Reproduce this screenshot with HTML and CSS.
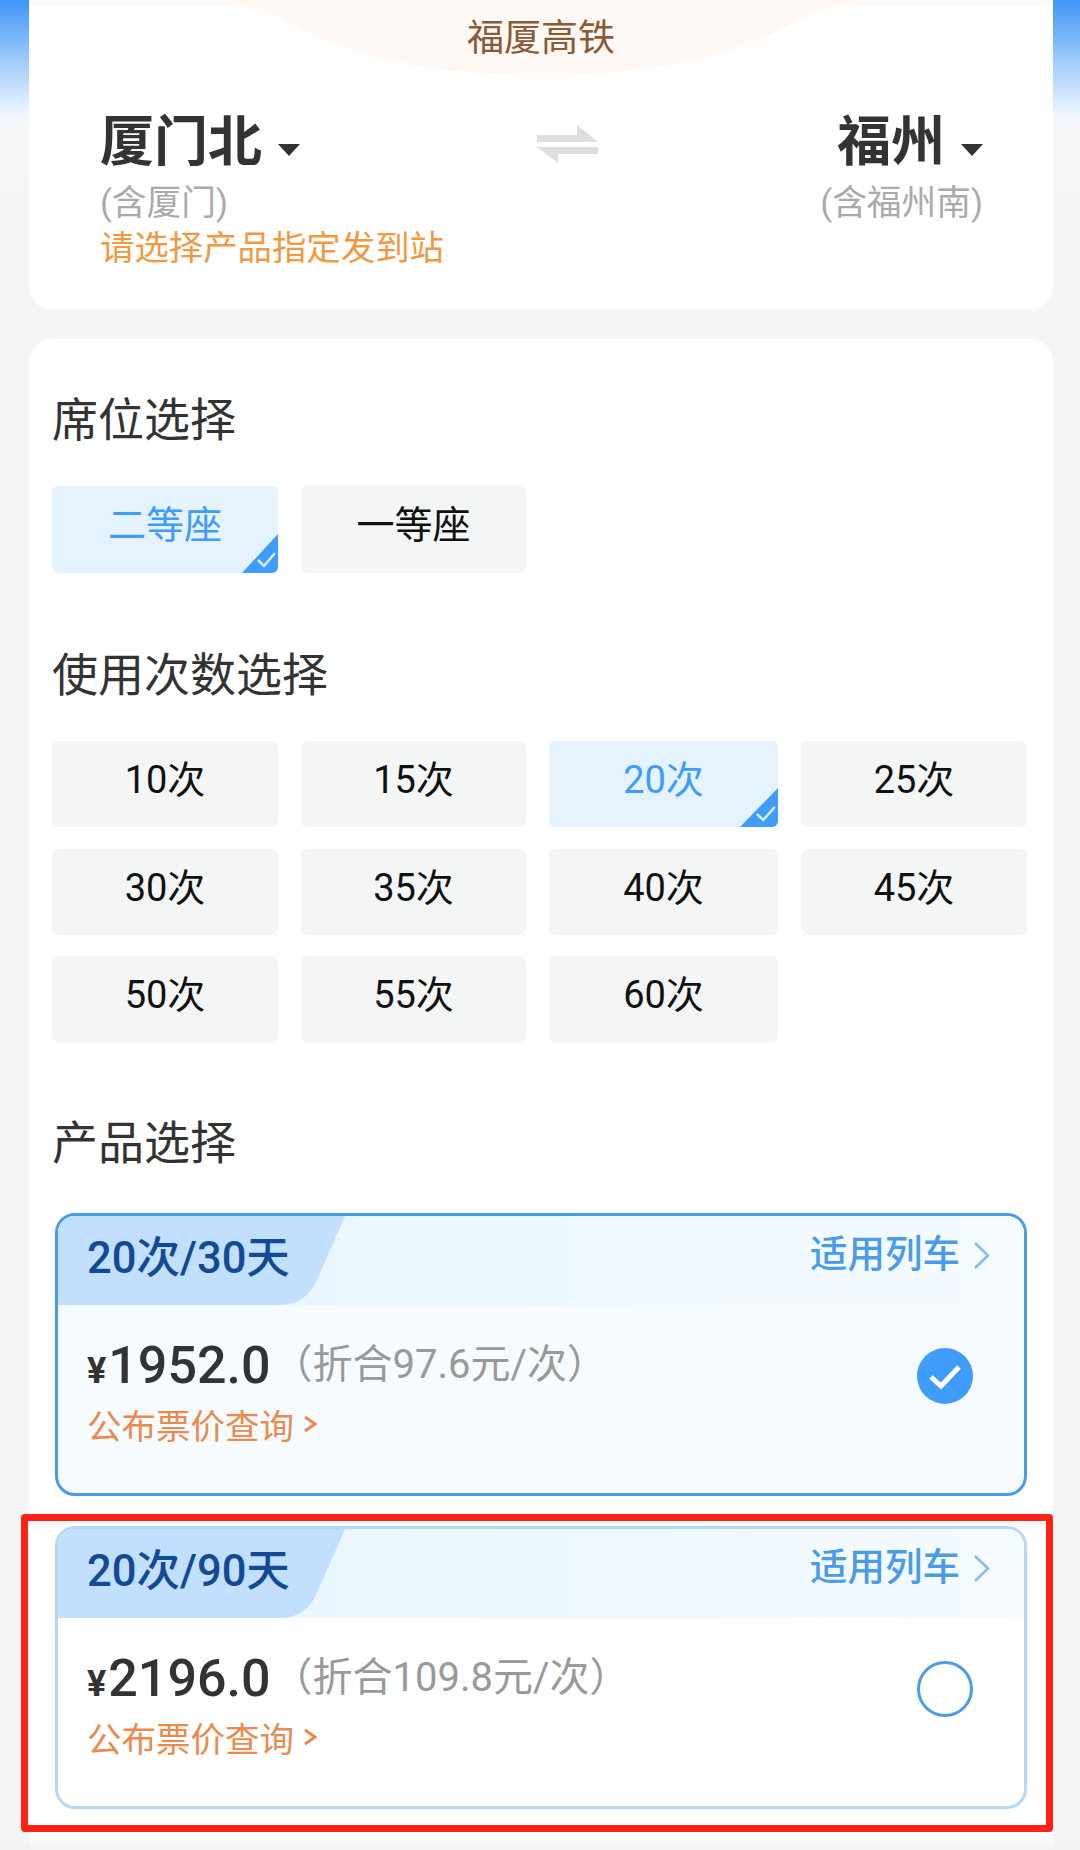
FILE: index.html
```html
<!DOCTYPE html>
<html lang="zh-CN">
<head>
    <meta charset="UTF-8">
    <meta name="viewport" content="width=device-width, initial-scale=1.0">
    <title>福厦高铁</title>
    <link rel="stylesheet" href="styles.css">
</head>
<body>
    <div class="page">
        <section class="card route-card">
            <svg class="title-bg" width="1024" height="80" viewBox="0 0 1024 80">
                <path d="M0 0H1024V5H830C805 5 790 10 763 23C735 38 695 55 640 65C600 72 550 75 512 75C474 75 424 72 384 65C329 55 289 38 261 23C234 10 219 5 194 5H0Z" fill="#fdf8f4"/>
            </svg>
            <div class="route-title">福厦高铁</div>
            <div class="route">
                <div class="station">
                    <div class="station-name">厦门北<span class="caret"></span></div>
                    <div class="station-sub">(含厦门)</div>
                    <div class="station-tip">请选择产品指定发到站</div>
                </div>
                <svg class="swap" width="61" height="38" viewBox="0 0 61 38">
                    <path d="M0 10H40V0L61 17H0Z" fill="#dedede"/>
                    <path d="M61 22V29H21V38L0 22Z" fill="#dedede"/>
                </svg>
                <div class="station station-right">
                    <div class="station-name">福州<span class="caret"></span></div>
                    <div class="station-sub">(含福州南)</div>
                </div>
            </div>
        </section>

        <section class="card options-card">
            <h2 class="heading">席位选择</h2>
            <div class="chips chips-seat">
                <div class="chip active">二等座
                    <svg class="tick" width="36" height="39" viewBox="0 0 36 39" preserveAspectRatio="none">
                        <path d="M0 39L36 0V39Z" fill="#409cfb"/>
                        <path d="M16 26L22 32L33 19" fill="none" stroke="#d9ecff" stroke-width="2.5"/>
                    </svg>
                </div>
                <div class="chip">一等座</div>
            </div>

            <h2 class="heading">使用次数选择</h2>
            <div class="chips chips-count">
                <div class="chip">10次</div>
                <div class="chip">15次</div>
                <div class="chip active">20次
                    <svg class="tick" width="38" height="39" viewBox="0 0 36 39" preserveAspectRatio="none">
                        <path d="M0 39L36 0V39Z" fill="#409cfb"/>
                        <path d="M16 26L22 32L33 19" fill="none" stroke="#d9ecff" stroke-width="2.5"/>
                    </svg>
                </div>
                <div class="chip">25次</div>
                <div class="chip">30次</div>
                <div class="chip">35次</div>
                <div class="chip">40次</div>
                <div class="chip">45次</div>
                <div class="chip">50次</div>
                <div class="chip">55次</div>
                <div class="chip">60次</div>
            </div>

            <h2 class="heading heading-product">产品选择</h2>

            <div class="product selected">
                <div class="product-head">
                    <svg class="product-tab" width="290" height="89" viewBox="0 0 290 89">
                        <path d="M0 0H287L259 64Q248 89 222 89H0Z" fill="#c2e0fd"/>
                    </svg>
                    <span class="product-name">20次/30天</span>
                    <span class="product-link">适用列车
                        <svg width="16" height="27" viewBox="0 0 16 27"><path d="M1 1L14 13.5L1 26" fill="none" stroke="#85bcf0" stroke-width="2.5"/></svg>
                    </span>
                </div>
                <div class="product-body">
                    <div>
                        <div class="price-row"><span class="yen">¥</span><span class="price">1952.0</span><span class="per-use">（折合97.6元/次）</span></div>
                        <div class="fare-link">公布票价查询
                            <svg width="13" height="18" viewBox="0 0 13 18"><path d="M1 2L11 9L1 16" fill="none" stroke="#ea8a4c" stroke-width="3"/></svg>
                        </div>
                    </div>
                    <svg class="radio" width="56" height="56" viewBox="0 0 56 56">
                        <circle cx="28" cy="28" r="28" fill="#409cfb"/>
                        <path d="M14 29L24 38L42 19" fill="none" stroke="#fff" stroke-width="5"/>
                    </svg>
                </div>
            </div>

            <div class="product">
                <div class="product-head">
                    <svg class="product-tab" width="290" height="89" viewBox="0 0 290 89">
                        <path d="M0 0H287L259 64Q248 89 222 89H0Z" fill="#c2e0fd"/>
                    </svg>
                    <span class="product-name">20次/90天</span>
                    <span class="product-link">适用列车
                        <svg width="16" height="27" viewBox="0 0 16 27"><path d="M1 1L14 13.5L1 26" fill="none" stroke="#85bcf0" stroke-width="2.5"/></svg>
                    </span>
                </div>
                <div class="product-body">
                    <div>
                        <div class="price-row"><span class="yen">¥</span><span class="price">2196.0</span><span class="per-use">（折合109.8元/次）</span></div>
                        <div class="fare-link">公布票价查询
                            <svg width="13" height="18" viewBox="0 0 13 18"><path d="M1 2L11 9L1 16" fill="none" stroke="#ea8a4c" stroke-width="3"/></svg>
                        </div>
                    </div>
                    <svg class="radio" width="56" height="56" viewBox="0 0 56 56">
                        <circle cx="28" cy="28" r="26.5" fill="none" stroke="#4a9be8" stroke-width="3"/>
                    </svg>
                </div>
            </div>
        </section>
    </div>

    <div class="red-box"></div>
    <div class="bottom-fade"></div>
</body>
</html>
```

FILE: styles.css
```css
* {
    margin: 0;
    padding: 0;
    box-sizing: border-box;
}

body {
    position: relative;
    height: 1850px;
    overflow: hidden;
    background: linear-gradient(to bottom, #3f95f7 0, #9ecbfa 60px, #eef6fe 115px, #f7f8f9 130px, #f5f5f5 200px);
    font-family: Roboto, 'Noto Sans CJK SC', sans-serif;
}

.page {
    padding: 0 27px 0 29px;
}

.card {
    background: #fff;
    border-radius: 24px;
}

/* route */
.route-card {
    position: relative;
    height: 310px;
    border-radius: 0 0 24px 24px;
    overflow: hidden;
}

.title-bg {
    position: absolute;
    top: 0;
    left: 0;
}

.route-title {
    position: relative;
    height: 76px;
    line-height: 78px;
    text-align: center;
    font-size: 37px;
    color: #8a5a35;
}

.route {
    position: relative;
    display: flex;
    padding: 29px 70px 0 71px;
}

.station {
    width: 437px;
}

.station-right {
    width: auto;
    margin-left: auto;
    text-align: right;
}

.station-name {
    height: 74px;
    line-height: 75px;
    font-size: 54px;
    font-weight: 700;
    color: #333;
}

.caret {
    display: inline-block;
    margin-left: 16px;
    vertical-align: 5px;
    border-left: 11px solid transparent;
    border-right: 11px solid transparent;
    border-top: 12px solid #333;
}

.station-sub {
    height: 46px;
    line-height: 48px;
    font-size: 34.7px;
    color: #aaa;
}

.station-tip {
    height: 46px;
    line-height: 46px;
    font-size: 34.4px;
    color: #f0993f;
}

.swap {
    margin-top: 20px;
}

/* options */
.options-card {
    margin-top: 29px;
    height: 1600px;
    padding: 51px 26px 0 23px;
}

.heading {
    height: 60px;
    line-height: 60px;
    margin-bottom: 36px;
    font-size: 46px;
    font-weight: 400;
    color: #333;
}

.chips {
    display: grid;
    grid-template-columns: 226px 225px 229px 226px;
    column-gap: 23px;
    row-gap: 21.5px;
    margin-bottom: 72px;
}

.chips-count {
    margin-bottom: 71px;
}

.chip {
    position: relative;
    height: 86px;
    line-height: 79px;
    text-align: center;
    font-size: 38px;
    color: #111;
    background: #f4f6f6;
    border-radius: 6px;
    overflow: hidden;
}

.chips-seat .chip {
    height: 87px;
}

.chip.active {
    color: #409cfb;
    background: #e5f2ff;
}

.tick {
    position: absolute;
    right: 0;
    bottom: 0;
}

.heading-product {
    margin-bottom: 40px;
}

/* products */
.product {
    width: 972px;
    height: 283px;
    margin: 0 0 30px 3px;
    border: 3px solid #b5d8f5;
    border-radius: 20px;
    overflow: hidden;
    background: #fff;
}

.product.selected {
    border-color: #4a9be8;
    background: #f5fbff;
}

.product-head {
    position: relative;
    display: flex;
    justify-content: space-between;
    align-items: center;
    height: 89px;
    padding: 0 34px 0 29px;
    background: linear-gradient(to right, #e6f3ff, #f5fbff);
}

.product-tab {
    position: absolute;
    top: 0;
    left: 0;
}

.product-name {
    position: relative;
    margin-top: -12px;
    font-size: 43.5px;
    font-weight: 500;
    color: #134a96;
}

.product-link {
    display: flex;
    align-items: center;
    gap: 14px;
    margin-top: -20px;
    font-size: 37.5px;
    font-weight: 500;
    color: #4a9be8;
}

.product-link svg {
    margin-top: 10px;
}

.product-body {
    display: flex;
    justify-content: space-between;
    padding: 28px 51px 0 29px;
}

.price-row {
    display: flex;
    align-items: baseline;
    height: 66px;
    line-height: 66px;
    color: #333;
}

.yen {
    font-size: 36px;
    font-weight: 700;
    margin-right: 2px;
}

.price {
    font-size: 52px;
    font-weight: 500;
}

.per-use {
    align-self: flex-start;
    margin-left: 2px;
    line-height: 63px;
    font-size: 40px;
    color: #999;
}

.fare-link {
    display: flex;
    align-items: center;
    gap: 10px;
    height: 50px;
    font-size: 34.5px;
    color: #ea8a4c;
}

.radio {
    margin-top: 15px;
}

/* annotation over the second product */
.red-box {
    position: absolute;
    top: 1514px;
    left: 21px;
    width: 1032px;
    height: 318px;
    border: 7px solid #ff2016;
    border-radius: 4px;
}

.bottom-fade {
    position: absolute;
    left: 0;
    right: 0;
    bottom: 0;
    height: 14px;
    background: linear-gradient(to bottom, rgba(245, 245, 245, 0), #f3f3f3);
}
```
